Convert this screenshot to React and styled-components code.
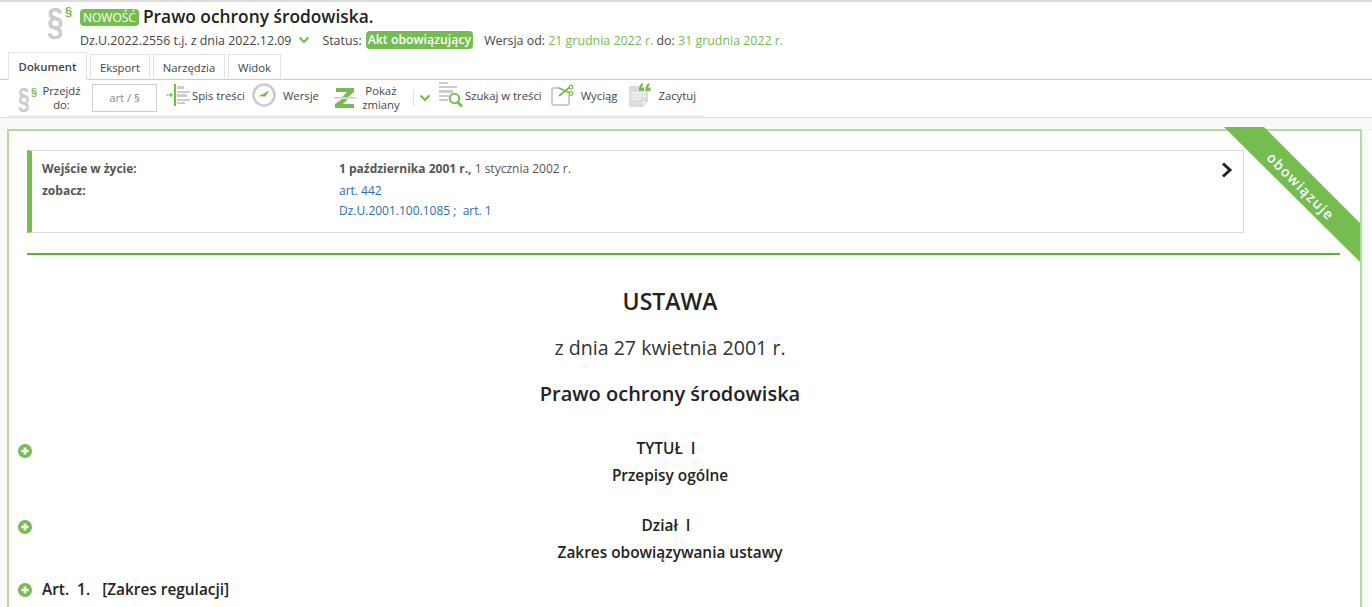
import React from 'react';
import styled, { createGlobalStyle } from 'styled-components';

const GREEN = '#75bd50';
const TEXT = '#333';

const Global = createGlobalStyle`
  html, body {
    margin: 0;
    padding: 0;
    height: 607px;
    overflow: hidden;
    background: #f9f9f9;
    font-family: "Open Sans", "Liberation Sans", sans-serif;
    color: ${TEXT};
  }
`;

const Page = styled.div`
  width: 1372px;
  height: 607px;
  overflow: hidden;
`;

const Header = styled.header`
  background: #fff;
  border-top: 2px solid #ddd;
  border-bottom: 1px solid #ccc;
  height: 80px;
  box-sizing: border-box;
  display: flex;
  flex-direction: column;
`;

const TitleBlock = styled.div`
  display: flex;
  flex: none;
  padding-left: 47px;
  height: 50px;
`;

const TitleLines = styled.div`
  margin-left: 7px;
  display: flex;
  flex-direction: column;
`;

const TitleRow = styled.div`
  display: flex;
  align-items: center;
  height: 27px;
  box-sizing: border-box;
`;

const NewBadge = styled.span`
  background: ${GREEN};
  color: #fff;
  font-size: 12px;
  line-height: 17px;
  padding: 0 3px;
  border-radius: 4px;
  margin: 3px 4px 0 0;
`;

const Title = styled.h1`
  margin: 0;
  font-size: 17.35px;
  font-weight: 600;
  color: #222;
`;

const MetaRow = styled.div`
  display: flex;
  align-items: center;
  font-size: 12.4px;
  height: 22px;
  color: #444;
  white-space: nowrap;
`;

const Gap = styled.span`
  margin-left: ${(p) => p.$w}px;
  display: inline-flex;
  align-items: center;
`;

const StatusBadge = styled.span`
  background: ${GREEN};
  color: #fff;
  font-weight: 600;
  font-size: 12.3px;
  line-height: 18px;
  padding: 0 2px;
  border-radius: 4px;
  margin-left: 4px;
`;

const GreenText = styled.span`
  color: ${GREEN};
  white-space: pre;
`;

const Tabs = styled.nav`
  display: flex;
  flex: 1;
  padding-left: 8px;
  align-items: flex-end;
  gap: 3px;
`;

const Tab = styled.div`
  box-sizing: border-box;
  width: ${(p) => p.$w}px;
  height: ${(p) => (p.$active ? 28 : 26)}px;
  margin-bottom: -1px;
  background: #fff;
  border: 1px solid #e2e2e2;
  border-bottom: ${(p) => (p.$active ? '1px solid #fff' : '1px solid #ccc')};
  font-size: 11.3px;
  font-weight: ${(p) => (p.$active ? 600 : 400)};
  display: flex;
  align-items: center;
  justify-content: center;
  color: #444;
`;

const ToolbarBand = styled.div`
  height: 38px;
  box-sizing: border-box;
  background: #fff;
  border-bottom: 1px solid #ddd;
  padding-left: 8px;
`;

const Toolbar = styled.div`
  width: 696px;
  height: 37px;
  box-sizing: border-box;
  border-bottom: 2px solid #eee;
  display: flex;
  align-items: center;
  font-size: 11.3px;
  color: #444;
`;

const Tool = styled.div`
  display: flex;
  align-items: center;
  margin-left: ${(p) => p.$ml || 0}px;
  margin-bottom: ${(p) => p.$up || 0}px;
  gap: ${(p) => p.$gap || 0}px;
  white-space: nowrap;
`;

const TwoLine = styled.div`
  text-align: center;
  line-height: 14px;
  width: ${(p) => p.$w}px;
`;

const JumpInput = styled.div`
  width: 65px;
  height: 28px;
  box-sizing: border-box;
  border: 1px solid #ccc;
  color: #888;
  font-size: 11.3px;
  display: flex;
  align-items: center;
  justify-content: center;
  margin-left: 11px;
`;

const Divider = styled.div`
  width: 1px;
  height: 16px;
  background: #ddd;
  margin-left: 13px;
`;

const Content = styled.main`
  display: flex;
  gap: 4px;
  padding: 11px 0 0 7px;
`;

const Card = styled.article`
  position: relative;
  width: 1355px;
  height: 480px;
  flex: none;
  box-sizing: border-box;
  background: #fff;
  border: 2px solid #b2dba0;
  border-bottom: none;
  padding: 19px 0 0 18px;
`;

const SidePanel = styled.aside`
  flex: 1;
  height: 480px;
  background: #fff;
  border-top: 1px solid #eee;
`;

const Ribbon = styled.div`
  position: absolute;
  top: -4px;
  right: 0;
  width: 136px;
  height: 135px;
  background: ${GREEN};
  clip-path: polygon(0 0, 40px 0, 100% 96px, 100% 100%);
`;

const RibbonText = styled.span`
  position: absolute;
  left: 77px;
  top: 59px;
  color: #fff;
  font-size: 14px;
  font-weight: 600;
  letter-spacing: 1.2px;
  white-space: nowrap;
  transform: translate(-50%, -50%) rotate(45deg);
`;

const InfoBox = styled.section`
  position: relative;
  box-sizing: border-box;
  width: 1217px;
  height: 83px;
  border: 1px solid #ddd;
  border-left: 5px solid ${GREEN};
  padding: 8px 0 0 10px;
  font-size: 12px;
  color: #555;
  display: grid;
  grid-template-columns: 297px 1fr;
  grid-template-rows: 22px 20px 20px;
  align-content: start;
`;

const InfoLabel = styled.div`
  font-weight: 700;
  color: #555;
  line-height: 20px;
`;

const InfoValue = styled.div`
  line-height: 20px;
  white-space: pre;
`;

const Strong = styled.b`
  font-weight: 700;
`;

const Link = styled.span`
  color: #1f70b5;
`;

const Chevron = styled.svg`
  position: absolute;
  top: 11px;
  right: 10px;
`;

const Rule = styled.hr`
  width: 1313px;
  height: 2px;
  margin: 20px 0 0;
  border: 0;
  background: #5cb032;
`;

const ActTitle = styled.h2`
  margin: 31px 0 0 -18px;
  font-size: 23px;
  line-height: 30px;
  font-weight: 600;
  text-align: center;
  color: #222;
  width: 1322px;
`;

const ActDate = styled.div`
  margin: 17px 0 0 -18px;
  width: 1322px;
  font-size: 19.6px;
  line-height: 30px;
  text-align: center;
  color: #333;
`;

const ActName = styled.h3`
  margin: 16px 0 0 -18px;
  width: 1322px;
  font-size: 20px;
  line-height: 30px;
  font-weight: 600;
  text-align: center;
  color: #222;
`;

const Section = styled.div`
  position: relative;
  margin: ${(p) => p.$mt}px 0 0 -18px;
  width: 1322px;
`;

const Expand = styled.svg`
  position: absolute;
  left: 9px;
  top: ${(p) => p.$top}px;
`;

const SectionLine = styled.div`
  font-size: 15.4px;
  font-weight: 600;
  line-height: 27px;
  text-align: center;
  color: #222;
  white-space: pre;
`;

const ArticleHead = styled.div`
  position: relative;
  margin: 12px 0 0 -18px;
  padding-left: 33px;
  font-size: 15.4px;
  font-weight: 600;
  line-height: 24px;
  color: #222;
  white-space: pre;
`;

const SignWrap = styled.span`
  display: inline-flex;
  align-items: flex-start;
  width: ${(p) => (p.$big ? 26 : 24)}px;
  height: ${(p) => (p.$big ? 36 : 30)}px;
  font-family: "Liberation Sans", sans-serif;
  font-weight: 700;
`;

const SignMain = styled.span`
  display: inline-block;
  width: ${(p) => (p.$big ? 18 : 13)}px;
  color: #ccc;
  font-size: ${(p) => (p.$big ? 38 : 30)}px;
  line-height: ${(p) => (p.$big ? 40 : 30)}px;
  transform: scaleX(${(p) => (p.$big ? 0.78 : 0.7)});
  transform-origin: left center;
`;

const SignSmall = styled.span`
  color: ${GREEN};
  font-size: ${(p) => (p.$big ? 13 : 11)}px;
  line-height: ${(p) => (p.$big ? 20 : 18)}px;
`;

const SectionSign = ({ size = 'lg' }) => {
  const big = size === 'lg';
  return (
    <SignWrap $big={big}>
      <SignMain $big={big}>§</SignMain>
      <SignSmall $big={big}>§</SignSmall>
    </SignWrap>
  );
};

const ChevronDown = () => (
  <svg width="12" height="8" viewBox="0 0 12 8">
    <path d="M1.5 1.5 L6 6 L10.5 1.5" fill="none" stroke={GREEN} strokeWidth="2.2" />
  </svg>
);

const TocIcon = () => (
  <svg width="24" height="24" viewBox="0 0 24 24">
    <rect x="8" y="1" width="2" height="22" fill={GREEN} />
    <path d="M0 12h4" stroke={GREEN} strokeWidth="1" />
    <path d="M4 9.5l3 2.5-3 2.5z" fill={GREEN} />
    <g fill="#ccc">
      <rect x="11" y="3" width="7" height="3" />
      <rect x="11" y="8" width="13" height="2" />
      <rect x="11" y="11" width="10" height="3" />
      <rect x="11" y="16" width="13" height="2" />
      <rect x="11" y="19" width="8" height="2" />
    </g>
  </svg>
);

const ClockIcon = () => (
  <svg width="24" height="24" viewBox="0 0 24 24">
    <circle cx="12" cy="12" r="10.5" fill="#fff" stroke="#ccc" strokeWidth="2.6" />
    <path d="M6 13.2 L11 11 L17.5 7 L13.5 13.5 Z" fill={GREEN} />
  </svg>
);

const ZIcon = () => (
  <svg width="22" height="22" viewBox="0 0 22 22">
    <path d="M2 1h18v4l-6 5H8l5-5H2zM8 12h6l-5 5h11v4H1v-4z" fill={GREEN} />
    <rect x="0" y="10" width="22" height="1.5" fill="#ccc" />
  </svg>
);

const SearchIcon = () => (
  <svg width="24" height="26" viewBox="0 0 24 26">
    <g fill="#ccc">
      <rect x="0" y="0" width="9" height="2" />
      <rect x="0" y="4" width="18" height="2" />
      <rect x="0" y="8" width="14" height="3" />
      <rect x="0" y="13" width="10" height="2" />
      <rect x="0" y="17" width="9" height="2" />
    </g>
    <circle cx="15.5" cy="16.5" r="4.7" fill="#fff" stroke={GREEN} strokeWidth="2" />
    <path d="M18.5 20 L23 24.5" stroke={GREEN} strokeWidth="2.5" />
  </svg>
);

const ExtractIcon = () => (
  <svg width="23" height="22" viewBox="0 0 23 22">
    <path d="M9 4H3a2 2 0 0 0-2 2v13a2 2 0 0 0 2 2h13a2 2 0 0 0 2-2v-8" fill="none" stroke="#ccc" strokeWidth="2" />
    <path d="M8 12 L19 3M8 4 L19 9" stroke={GREEN} strokeWidth="1.7" />
    <circle cx="20" cy="3" r="1.8" fill="#fff" stroke={GREEN} strokeWidth="1.2" />
    <circle cx="20" cy="9.5" r="1.8" fill="#fff" stroke={GREEN} strokeWidth="1.2" />
  </svg>
);

const QuoteIcon = () => (
  <svg width="22" height="24" viewBox="0 0 22 24">
    <path d="M0 3h10v5h9v10l-5 6H0z" fill="#ddd" />
    <path d="M2 10h15M2 13h15M2 16h10" stroke="#fff" strokeWidth="1.2" />
    <path d="M13 24v-6h6z" fill="#f3f3f3" stroke="#ccc" strokeWidth=".7" />
    <path d="M10 8c-.5-4 1-7 4-8v2.500c-1 .5-1.300 1-1.300 2H15V8zM16.500 8c-.5-4 1-7 4-8v2.500c-1 .5-1.300 1-1.300 2h2.300V8z" fill={GREEN} />
  </svg>
);

const PlusCircle = ({ top }) => (
  <Expand $top={top} width="14" height="14" viewBox="0 0 14 14">
    <circle cx="7" cy="7" r="7" fill={GREEN} />
    <path d="M7 3.400v7.200M3.400 7h7.200" stroke="#fff" strokeWidth="2.6" />
  </Expand>
);

export default function App() {
  return (
    <Page>
      <Global />
      <Header>
        <TitleBlock>
          <SectionSign />
          <TitleLines>
            <TitleRow>
              <NewBadge>NOWOŚĆ</NewBadge>
              <Title>Prawo ochrony środowiska.</Title>
            </TitleRow>
            <MetaRow>
              <span>Dz.U.2022.2556 t.j. z dnia 2022.12.09</span>
              <Gap $w={7}><ChevronDown /></Gap>
              <Gap $w={12}>Status:</Gap>
              <StatusBadge>Akt obowiązujący</StatusBadge>
              <Gap $w={11}>Wersja od:&nbsp;</Gap>
              <GreenText>21 grudnia 2022 r. </GreenText>
              <span>do:&nbsp;</span>
              <GreenText>31 grudnia 2022 r.</GreenText>
            </MetaRow>
          </TitleLines>
        </TitleBlock>
        <Tabs>
          <Tab $active $w={79}>Dokument</Tab>
          <Tab $w={60}>Eksport</Tab>
          <Tab $w={72}>Narzędzia</Tab>
          <Tab $w={53}>Widok</Tab>
        </Tabs>
      </Header>
      <ToolbarBand>
        <Toolbar>
          <Tool $ml={10}><SectionSign size="sm" /></Tool>
          <TwoLine $w={39}>Przejdź<br />do:</TwoLine>
          <JumpInput>art / §</JumpInput>
          <Tool $ml={9} $gap={2} $up={5}><TocIcon />Spis treści</Tool>
          <Tool $ml={7} $gap={7} $up={5}><ClockIcon />Wersje</Tool>
          <Tool $ml={15} $gap={6}><ZIcon /><TwoLine $w={38}>Pokaż<br />zmiany</TwoLine></Tool>
          <Divider />
          <Tool $ml={5}><ChevronDown /></Tool>
          <Tool $ml={8} $gap={2} $up={5}><SearchIcon />Szukaj w treści</Tool>
          <Tool $ml={9} $gap={7} $up={5}><ExtractIcon />Wyciąg</Tool>
          <Tool $ml={12} $gap={7} $up={5}><QuoteIcon />Zacytuj</Tool>
        </Toolbar>
      </ToolbarBand>
      <Content>
        <Card>
          <Ribbon><RibbonText>obowiązuje</RibbonText></Ribbon>
          <InfoBox>
            <InfoLabel>Wejście w życie:</InfoLabel>
            <InfoValue><Strong>1 października 2001 r.,</Strong> 1 stycznia 2002 r.</InfoValue>
            <InfoLabel>zobacz:</InfoLabel>
            <InfoValue><Link>art. 442</Link></InfoValue>
            <span />
            <InfoValue><Link>Dz.U.2001.100.1085 ;  art. 1</Link></InfoValue>
            <Chevron width="12" height="16" viewBox="0 0 12 16">
              <path d="M2 1.500 L9 8 L2 14.500" fill="none" stroke="#222" strokeWidth="3" />
            </Chevron>
          </InfoBox>
          <Rule />
          <ActTitle>USTAWA</ActTitle>
          <ActDate>z dnia 27 kwietnia 2001 r.</ActDate>
          <ActName>Prawo ochrony środowiska</ActName>
          <Section $mt={26}>
            <PlusCircle top={9} />
            <SectionLine>{'TYTUŁ  I  '}</SectionLine>
            <SectionLine>Przepisy ogólne</SectionLine>
          </Section>
          <Section $mt={23}>
            <PlusCircle top={8} />
            <SectionLine>{'Dział  I  '}</SectionLine>
            <SectionLine>Zakres obowiązywania ustawy</SectionLine>
          </Section>
          <ArticleHead>
            <PlusCircle top={5} />
            {'Art.  1.   [Zakres regulacji]'}
          </ArticleHead>
        </Card>
        <SidePanel />
      </Content>
    </Page>
  );
}
